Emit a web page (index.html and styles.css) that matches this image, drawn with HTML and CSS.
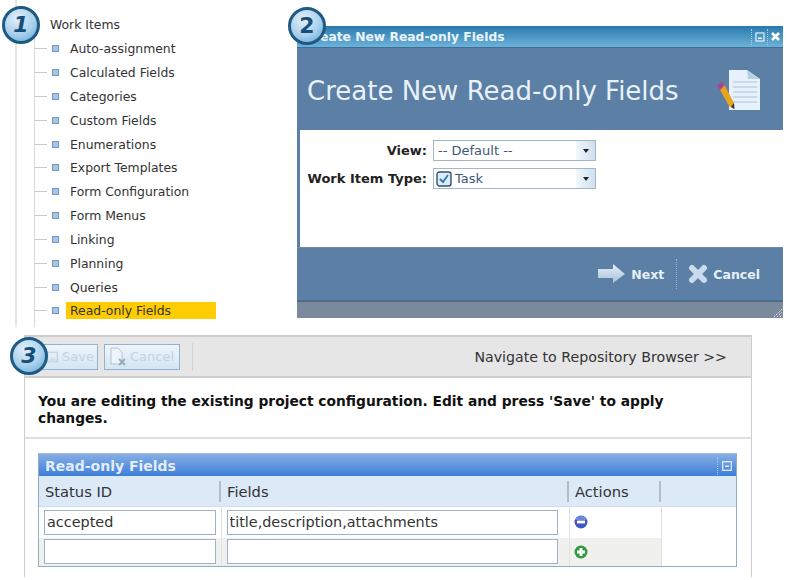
FILE: index.html
```html
<!DOCTYPE html>
<html lang="en">
<head>
    <meta charset="UTF-8">
    <meta name="viewport" content="width=device-width, initial-scale=1.0">
    <title>Read-only Fields</title>
    <link rel="stylesheet" href="styles.css">
</head>
<body>
    <div id="page">
        <div class="badge badge-one">1</div>
        <div class="badge badge-two">2</div>
        <div class="badge badge-three">3</div>

        <div class="top">
            <div class="tree">
                <div class="tree-root">Work Items</div>
                <ul class="tree-list">
                    <li class="tree-item"><span class="dash"></span><span class="marker"></span><span class="label">Auto-assignment</span></li>
                    <li class="tree-item"><span class="dash"></span><span class="marker"></span><span class="label">Calculated Fields</span></li>
                    <li class="tree-item"><span class="dash"></span><span class="marker"></span><span class="label">Categories</span></li>
                    <li class="tree-item"><span class="dash"></span><span class="marker"></span><span class="label">Custom Fields</span></li>
                    <li class="tree-item"><span class="dash"></span><span class="marker"></span><span class="label">Enumerations</span></li>
                    <li class="tree-item"><span class="dash"></span><span class="marker"></span><span class="label">Export Templates</span></li>
                    <li class="tree-item"><span class="dash"></span><span class="marker"></span><span class="label">Form Configuration</span></li>
                    <li class="tree-item"><span class="dash"></span><span class="marker"></span><span class="label">Form Menus</span></li>
                    <li class="tree-item"><span class="dash"></span><span class="marker"></span><span class="label">Linking</span></li>
                    <li class="tree-item"><span class="dash"></span><span class="marker"></span><span class="label">Planning</span></li>
                    <li class="tree-item"><span class="dash"></span><span class="marker"></span><span class="label">Queries</span></li>
                    <li class="tree-item"><span class="dash"></span><span class="marker"></span><span class="label selected">Read-only Fields</span></li>
                </ul>
            </div>

            <div class="dialog">
                <div class="dialog-title">
                    <span class="dialog-title-text">Create New Read-only Fields</span>
                    <span class="title-tool">
                        <svg width="10" height="10" viewBox="0 0 10 10"><rect x="1" y="1" width="8" height="8" fill="none" stroke="#e8f2f9" stroke-width="1.2"/><rect x="3" y="5.5" width="4" height="1.5" fill="#e8f2f9"/></svg>
                    </span>
                    <span class="title-tool">
                        <svg width="11" height="11" viewBox="0 0 11 11"><path d="M2 2 L9 9 M9 2 L2 9" stroke="#fff" stroke-width="2.6"/></svg>
                    </span>
                </div>
                <div class="dialog-head">
                    <h1 class="dialog-heading">Create New Read-only Fields</h1>
                    <svg class="dialog-icon" width="46" height="42" viewBox="0 0 46 42">
                        <path d="M14 1 H32 L45 10 V41 H14 Z" fill="#e6f1fb"/>
                        <path d="M32 1 L33 10 H45 Z" fill="#b9cfe2"/>
                        <path d="M18 13 H42 M18 18 H42 M18 23 H42 M18 28 H42 M18 33 H42" stroke="#a9c2d8" stroke-width="1.2"/>
                        <path d="M4 19 L9 15 L19 34 L19 40 L14 37 Z" fill="#e9a31f"/>
                        <path d="M2 17 L6 13 L10 16 L5 21 Z" fill="#a8448c"/>
                        <path d="M16 38 L19 34 L19.5 40 Z" fill="#333"/>
                    </svg>
                </div>
                <div class="dialog-form">
                    <div class="form-row">
                        <label class="form-label">View:</label>
                        <div class="combo">
                            <span class="combo-text">-- Default --</span>
                            <span class="combo-btn"><span class="combo-arrow"></span></span>
                        </div>
                    </div>
                    <div class="form-row">
                        <label class="form-label">Work Item Type:</label>
                        <div class="combo">
                            <svg class="task-icon" width="16" height="16" viewBox="0 0 16 16"><rect x="1" y="1" width="14" height="14" rx="2.5" fill="#dcebf7" stroke="#33526e" stroke-width="1.4"/><path d="M4 8 L7 11 L12 4" fill="none" stroke="#2f78b5" stroke-width="1.8"/></svg>
                            <span class="combo-text combo-task">Task</span>
                            <span class="combo-btn"><span class="combo-arrow"></span></span>
                        </div>
                    </div>
                </div>
                <div class="dialog-foot">
                    <svg width="28" height="20" viewBox="0 0 28 20"><defs><linearGradient id="pale" x1="0" y1="0" x2="0" y2="1"><stop offset="0" stop-color="#e4eef6"/><stop offset="1" stop-color="#a9c3da"/></linearGradient></defs><path d="M0 5 H15 V0 L27 10 L15 19 V14 H0 Z" fill="url(#pale)"/></svg>
                    <span class="foot-text">Next</span>
                    <span class="foot-sep"></span>
                    <svg width="20" height="20" viewBox="0 0 20 20"><path d="M4 4 L16 16 M16 4 L4 16" stroke="#c9dbea" stroke-width="6" stroke-linecap="round"/></svg>
                    <span class="foot-text">Cancel</span>
                </div>
                <div class="dialog-status">
                    <svg width="9" height="10" viewBox="0 0 9 10"><path d="M0 9 L8 1 M3 9 L8 4 M6 9 L8 7" stroke="#e6eef5" stroke-width="1" stroke-dasharray="1.5 1"/></svg>
                </div>
            </div>
        </div>

        <div class="config">
            <div class="toolbar">
                <button class="tool-btn tool-save" disabled>
                    <svg width="14" height="14" viewBox="0 0 14 14"><rect x="1" y="1" width="12" height="12" fill="none" stroke="#bccfde" stroke-width="1.4"/><rect x="4" y="8" width="6" height="5" fill="#cfdeea"/></svg>
                    Save
                </button>
                <button class="tool-btn tool-cancel" disabled>
                    <svg width="16" height="19" viewBox="0 0 16 19"><path d="M1 1 H8 L12 5 V17 H1 Z" fill="#eef5fa" stroke="#b5c2cd"/><path d="M9 12 L15 18 M15 12 L9 18" stroke="#9aa9b5" stroke-width="1.8"/></svg>
                    Cancel
                </button>
                <span class="tool-sep"></span>
                <span class="tool-link">Navigate to Repository Browser &gt;&gt;</span>
            </div>
            <p class="notice">You are editing the existing project configuration. Edit and press 'Save' to apply changes.</p>
            <div class="grid-wrap">
                <div class="grid">
                    <div class="grid-title">
                        <span class="grid-title-text">Read-only Fields</span>
                        <span class="grid-tool">
                            <svg width="10" height="10" viewBox="0 0 10 10"><rect x="0.7" y="0.7" width="8.6" height="8.6" fill="none" stroke="#dfeaf8" stroke-width="1.3"/><rect x="3" y="4.5" width="4" height="1.5" fill="#dfeaf8"/></svg>
                        </span>
                    </div>
                    <table class="grid-table">
                        <colgroup>
                            <col class="col-status">
                            <col class="col-fields">
                            <col class="col-actions">
                            <col>
                        </colgroup>
                        <thead>
                            <tr>
                                <th><span class="th-text">Status ID</span></th>
                                <th><span class="th-text">Fields</span></th>
                                <th><span class="th-text">Actions</span></th>
                                <th></th>
                            </tr>
                        </thead>
                        <tbody>
                            <tr class="row-first">
                                <td><input class="cell-input" type="text" value="accepted"></td>
                                <td class="cell-fields"><input class="cell-input" type="text" value="title,description,attachments"></td>
                                <td class="cell-action">
                                    <svg width="14" height="14" viewBox="0 0 14 14"><circle cx="7" cy="7" r="6.5" fill="#3f58c4"/><path d="M1 5 A6.5 6.5 0 0 1 13 5 Z" fill="#6f88dc"/><rect x="3" y="5.6" width="8" height="2.8" fill="#fff"/></svg>
                                </td>
                                <td class="cell-empty"></td>
                            </tr>
                            <tr class="row-alt">
                                <td><input class="cell-input" type="text"></td>
                                <td class="cell-fields"><input class="cell-input" type="text"></td>
                                <td class="cell-action">
                                    <svg width="14" height="14" viewBox="0 0 14 14"><circle cx="7" cy="7" r="6.5" fill="#2f9a45"/><path d="M5.6 3 H8.4 V5.6 H11 V8.4 H8.4 V11 H5.6 V8.4 H3 V5.6 H5.6 Z" fill="#fff"/></svg>
                                </td>
                                <td class="cell-empty"></td>
                            </tr>
                        </tbody>
                    </table>
                </div>
            </div>
        </div>
    </div>
</body>
</html>
```

FILE: styles.css
```css
body {
    margin: 0;
    background-color: #fff;
    color: #333;
    font-family: "DejaVu Sans", Verdana, sans-serif;
    font-size: 12px;
    overflow: hidden;
}
#page {
    position: relative;
    width: 787px;
    height: 580px;
}

/* numbered callouts sit over the panels */
.badge {
    position: absolute;
    z-index: 5;
    width: 32px;
    height: 32px;
    border: 3px solid #1f5a82;
    border-radius: 50%;
    background: radial-gradient(circle at 40% 30%, #e3f0f9 0%, #a9d0ec 55%, #5aa3d8 100%);
    color: #174f78;
    font-size: 22px;
    font-weight: bold;
    font-style: italic;
    line-height: 32px;
    text-align: center;
}
.badge-one { left: 2px; top: 6px; }
.badge-two { left: 288px; top: 7px; font-style: normal; }
.badge-three { left: 10px; top: 337px; }

.top {
    display: flex;
    height: 335px;
}

/* tree */
.tree {
    width: 282px;
    height: 327px;
    margin-left: 15px;
    border-left: 2px solid #e6e6e6;
    box-sizing: border-box;
}
.tree-root {
    height: 37px;
    padding: 17px 0 0 33px;
    box-sizing: border-box;
    font-size: 12.4px;
    line-height: 16px;
}
.tree-list {
    margin: 0 0 0 17px;
    padding: 0;
    list-style: none;
    border-left: 1px solid #d8d8d8;
    height: 290px;
}
.tree-item {
    display: flex;
    align-items: center;
    height: 23.82px;
}
.dash {
    width: 12px;
    height: 1px;
    background-color: #c8c8c8;
}
.marker {
    width: 5px;
    height: 5px;
    margin-left: 5px;
    border: 1px solid #6f97c6;
    background-color: #a9c4e4;
}
.label {
    margin-left: 7px;
    padding: 0 4px;
    font-size: 12.4px;
    line-height: 17px;
}
.label.selected {
    width: 142px;
    background-color: #ffcc00;
}

/* dialog */
.dialog {
    width: 486px;
    height: 292px;
    margin-top: 26px;
    display: flex;
    flex-direction: column;
    background-color: #5b7fa5;
}
.dialog-title {
    height: 22px;
    display: flex;
    align-items: center;
    background: linear-gradient(#2a79ad, #6db2da);
    border-bottom: 1px solid #3d6f96;
    box-sizing: border-box;
    color: #eaf4fb;
    font-size: 12.3px;
    font-weight: bold;
}
.dialog-title-text {
    flex: 1;
    margin-left: 8px;
}
.title-tool {
    width: 15px;
    height: 16px;
    display: flex;
    align-items: center;
    justify-content: center;
    border-left: 1px dotted #a6cfe6;
}
.dialog-head {
    height: 82px;
    display: flex;
    align-items: center;
    justify-content: space-between;
    padding: 2px 22px 0 10px;
    box-sizing: border-box;
}
.dialog-heading {
    margin: 1px 0 0;
    color: #e9f1f8;
    font-size: 26px;
    font-weight: normal;
}
.dialog-form {
    height: 117px;
    margin-left: 3px;
    padding-top: 10px;
    box-sizing: border-box;
    background-color: #fff;
}
.form-row {
    display: flex;
    align-items: center;
    margin-bottom: 7px;
}
.form-label {
    width: 127px;
    text-align: right;
    color: #222;
    font-size: 13px;
    font-weight: bold;
}
.combo {
    width: 161px;
    height: 19px;
    margin-left: 6px;
    display: flex;
    align-items: center;
    border: 1px solid #a4b6c6;
    background-color: #fff;
    color: #3b5878;
    font-size: 13px;
}
.combo-text {
    flex: 1;
    margin-left: 4px;
}
.combo-task {
    margin-left: 3px;
}
.task-icon {
    margin-left: 2px;
}
.combo-btn {
    width: 19px;
    height: 19px;
    display: flex;
    align-items: center;
    justify-content: center;
    background: linear-gradient(to right, #f2f7fb, #cfe0ee);
}
.combo-arrow {
    border-top: 4px solid #223;
    border-left: 3px solid transparent;
    border-right: 3px solid transparent;
}
.dialog-foot {
    height: 55px;
    display: flex;
    align-items: center;
    justify-content: flex-end;
    padding-right: 23px;
    box-sizing: border-box;
    border-top: 1px solid #75899d;
    border-bottom: 2px solid #4e6d8d;
    color: #e6f0f8;
    font-weight: bold;
    font-size: 12.5px;
}
.foot-text {
    margin-left: 5px;
}
.foot-sep {
    height: 30px;
    margin: 0 11px 0 12px;
    border-left: 1px dotted #9db4c9;
}
.dialog-status {
    flex: 1;
    display: flex;
    align-items: flex-end;
    justify-content: flex-end;
    background-color: #7a8a9c;
}

/* configuration panel */
.config {
    width: 728px;
    height: 242px;
    margin-left: 24px;
    border: 1px solid #cdcdcd;
    border-width: 2px 1px 0 1px;
    box-sizing: border-box;
}
.toolbar {
    height: 39px;
    display: flex;
    align-items: center;
    padding-left: 16px;
    border-bottom: 2px solid #cfcfcf;
    background-color: #e6e6e6;
}
.tool-btn {
    height: 26px;
    display: flex;
    align-items: center;
    gap: 4px;
    margin-right: 6px;
    padding: 0 3px 0 5px;
    border: 1px solid #92b2cd;
    background: linear-gradient(#eef5fb, #d4e6f4);
    color: #c3d3df;
    font-family: inherit;
    font-size: 13px;
}
.tool-save { width: 57px; }
.tool-cancel { width: 76px; }
.tool-sep {
    height: 28px;
    margin-left: 6px;
    border-left: 1px solid #cdd5db;
}
.tool-link {
    margin-left: auto;
    margin-right: 24px;
    font-size: 14.2px;
}
.notice {
    width: 680px;
    height: 59px;
    margin: 0;
    padding: 15px 0 0 13px;
    box-sizing: border-box;
    color: #111;
    font-size: 13.8px;
    font-weight: bold;
    line-height: 17px;
}
.grid-wrap {
    padding: 14px 14px 0 13px;
    border-top: 2px solid #dedede;
}
.grid {
    border: 1px solid #8fadc4;
    border-top-color: #a6bdcf;
}
.grid-title {
    height: 22px;
    padding-top: 1px;
    box-sizing: border-box;
    display: flex;
    align-items: center;
    background: linear-gradient(#86aee3, #3e7ed9);
    color: #e2edf9;
    font-size: 14px;
    font-weight: bold;
}
.grid-title-text {
    flex: 1;
    margin-left: 6px;
}
.grid-tool {
    width: 18px;
    height: 18px;
    display: flex;
    align-items: center;
    justify-content: center;
    border-left: 1px dotted #a9c6ec;
}
.grid-table {
    width: 100%;
    table-layout: fixed;
    border-collapse: collapse;
    font-size: 14.7px;
}
.col-status { width: 182px; }
.col-fields { width: 348px; }
.col-actions { width: 92px; }
.grid-table th {
    height: 30px;
    padding: 0;
    background-color: #dce9f7;
    border-bottom: 1px solid #d0dfee;
    font-weight: normal;
    text-align: left;
}
.th-text {
    display: block;
    height: 21px;
    padding-left: 6px;
    line-height: 21px;
    border-right: 2px solid #b4bcc4;
}
.grid-table td {
    padding: 0 5px;
    box-sizing: border-box;
    border-right: 1px solid #dde3e8;
}
.row-first td {
    height: 31px;
}
.row-alt td {
    height: 28px;
    background-color: #f0f0ec;
}
.grid-table td.cell-fields {
    padding-right: 11px;
}
.grid-table td.cell-action {
    padding-left: 4px;
}
.row-alt td.cell-empty, td.cell-empty {
    background-color: #fff;
    border-right: 0;
}
.cell-input {
    display: block;
    width: 100%;
    height: 25px;
    padding: 0 2px;
    box-sizing: border-box;
    border: 1px solid #9db2c4;
    background-color: #fff;
    color: #333;
    font-family: inherit;
    font-size: 14.4px;
}
.cell-action svg {
    display: block;
}
```
